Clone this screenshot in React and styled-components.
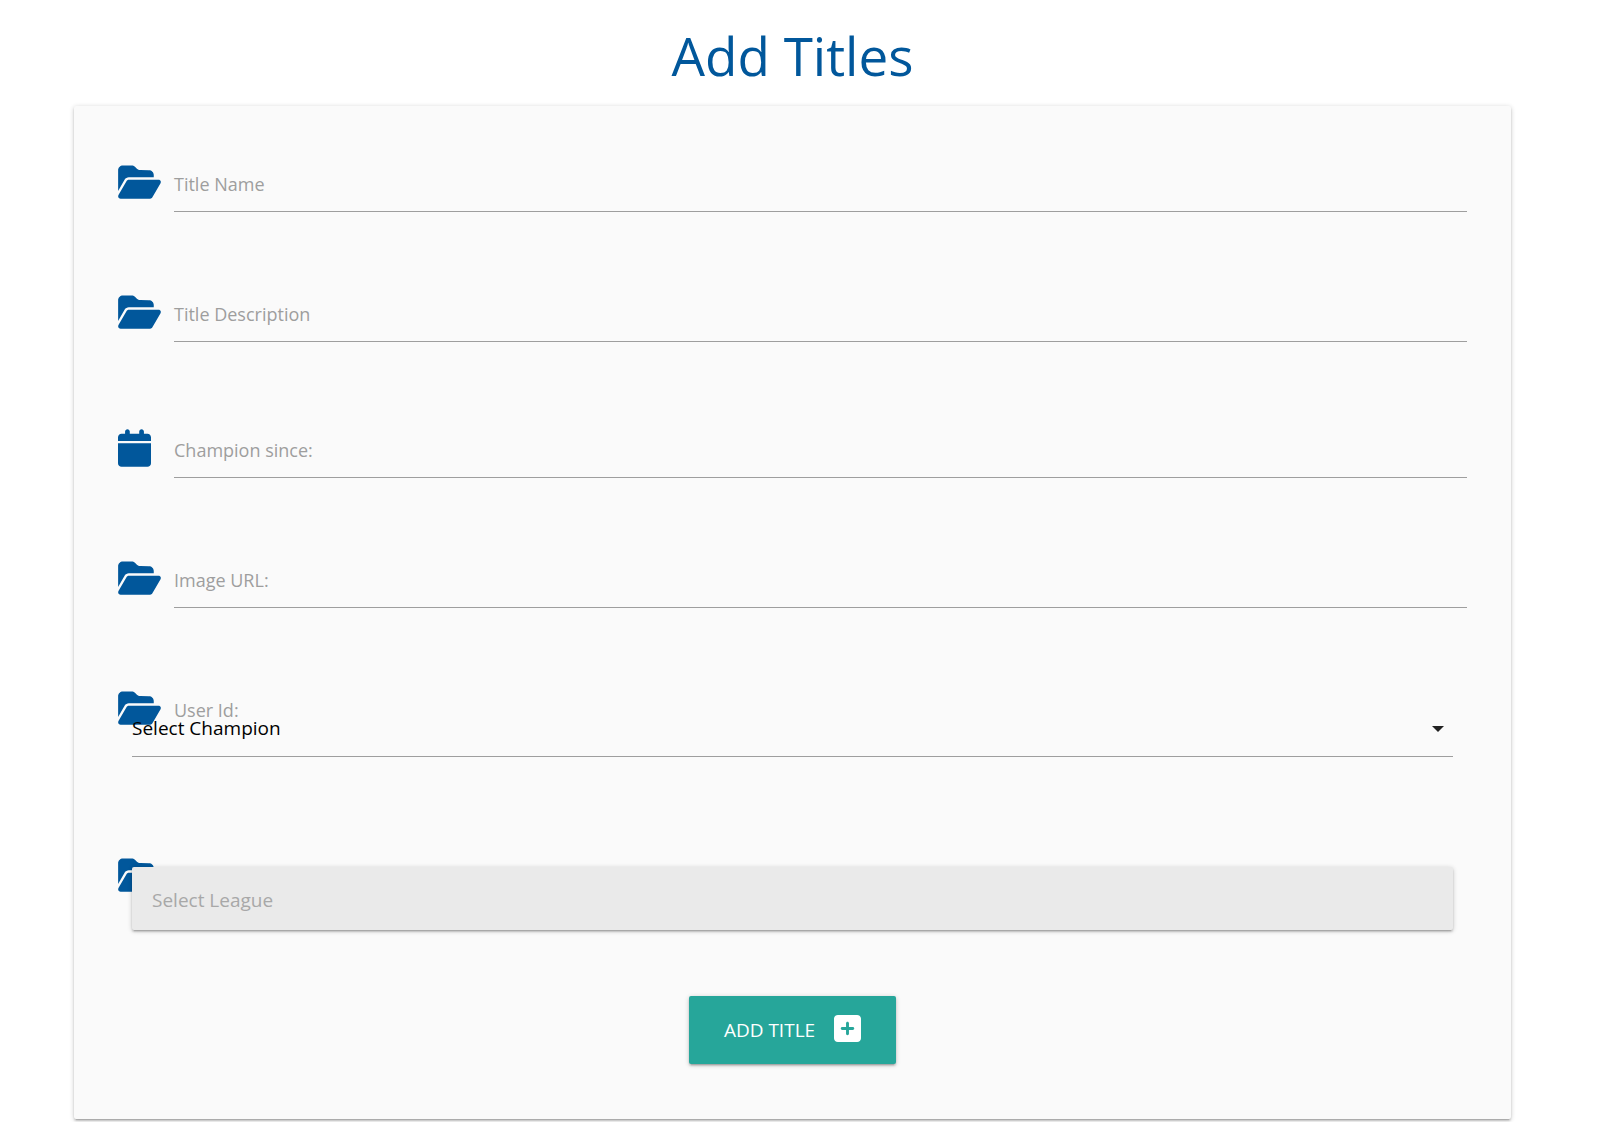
import React from "react";
import styled, { createGlobalStyle } from "styled-components";
import { FaFolderOpen, FaCalendar, FaSquarePlus } from "react-icons/fa6";

const GlobalStyle = createGlobalStyle`
  *, *::before, *::after { box-sizing: border-box; }
  body {
    margin: 0;
    background: #ffffff;
    font-family: "Segoe UI", "Open Sans", "Noto Sans", sans-serif;
    color: rgba(0, 0, 0, 0.87);
  }
`;

const raised = `
  box-shadow: 0 2px 2px 0 rgba(0, 0, 0, 0.14),
    0 3px 1px -2px rgba(0, 0, 0, 0.12),
    0 1px 5px 0 rgba(0, 0, 0, 0.2);
`;

const Page = styled.main`
  padding: 0 86px 3px 74px;
`;

const Title = styled.h1`
  margin: 0;
  padding-top: 16px;
  height: 106px;
  color: #01579b;
  font-size: 53px;
  font-weight: 400;
  line-height: 80px;
  text-align: center;
`;

const Card = styled.form`
  display: flex;
  flex-direction: column;
  padding: 46px 44px 55px;
  background: #fafafa;
  border-radius: 2px;
  ${raised}
`;

const Group = styled.div`
  display: flex;
  flex-direction: column;
  margin-bottom: ${(p) => p.$gap}px;
`;

const Field = styled.div`
  display: grid;
  grid-template-columns: 56px 1fr;
  align-items: center;
  height: 60px;
`;

const Icon = styled.span`
  display: flex;
  color: #01579b;

  svg {
    width: ${(p) => p.$width}px;
    height: 38px;
  }
`;

const Label = styled.label`
  grid-area: 1 / 2;
  padding-top: 3px;
  color: #9e9e9e;
  font-size: 18px;
  line-height: 28px;
  pointer-events: none;
`;

const Input = styled.input`
  grid-area: 1 / 2;
  width: 100%;
  height: 60px;
  padding: 3px 0 0;
  border: 0;
  border-bottom: 1px solid #9e9e9e;
  border-radius: 0;
  outline: 0;
  background: transparent;
  font: inherit;
  font-size: 18px;

  &:focus {
    border-bottom-color: #26a69a;
  }
`;

const SelectBox = styled.div`
  display: grid;
  align-items: center;
  position: relative;
  margin: -38px 14px 0;
`;

const Select = styled.select`
  grid-area: 1 / 1;
  width: 100%;
  height: 57px;
  padding: 0;
  appearance: none;
  border: 0;
  border-bottom: 1px solid #9e9e9e;
  border-radius: 0;
  outline: 0;
  background: transparent;
  color: #000000;
  font: inherit;
  font-size: 19px;
`;

const DisabledSelect = styled(Select)`
  height: 63px;
  padding: 3px 20px 0;
  border: 0;
  border-radius: 2px;
  background: #eaeaea;
  color: #a8a8a8;
  opacity: 1;
  ${raised}
`;

const Caret = styled.svg`
  grid-area: 1 / 1;
  justify-self: end;
  margin-right: 9px;
  width: 12px;
  height: 6px;
  fill: #212121;
  pointer-events: none;
`;

const Submit = styled.button`
  display: flex;
  align-items: center;
  align-self: center;
  gap: 19px;
  height: 68px;
  padding: 0 35px;
  border: 0;
  border-radius: 2px;
  background: #26a69a;
  color: #ffffff;
  font: inherit;
  font-size: 19px;
  text-transform: uppercase;
  cursor: pointer;
  ${raised}

  svg {
    width: 27px;
    height: 31px;
    margin-bottom: 3px;
  }
`;

const FolderIcon = () => (
  <Icon $width={43} aria-hidden="true"><FaFolderOpen /></Icon>
);

const CalendarIcon = () => (
  <Icon $width={33} aria-hidden="true"><FaCalendar /></Icon>
);

const textFields = [
  { id: "title-name", label: "Title Name", icon: FolderIcon, gap: 70 },
  { id: "title-description", label: "Title Description", icon: FolderIcon, gap: 76 },
  { id: "champion-since", label: "Champion since:", icon: CalendarIcon, gap: 70 },
  { id: "image-url", label: "Image URL:", icon: FolderIcon, gap: 70 },
];

export default function App() {
  return (
    <>
      <GlobalStyle />
      <Page>
        <Title>Add Titles</Title>
        <Card onSubmit={(e) => e.preventDefault()}>
          {textFields.map(({ id, label, icon: Glyph, gap }) => (
            <Group key={id} $gap={gap}>
              <Field>
                <Glyph />
                <Input id={id} name={id} type="text" />
                <Label htmlFor={id}>{label}</Label>
              </Field>
            </Group>
          ))}

          <Group $gap={88}>
            <Field>
              <FolderIcon />
              <Label htmlFor="champion">User Id:</Label>
            </Field>
            <SelectBox>
              <Select id="champion" name="champion" defaultValue="">
                <option value="">Select Champion</option>
              </Select>
              <Caret viewBox="0 0 12 6" aria-hidden="true">
                <path d="M0 0h12L6 6z" />
              </Caret>
            </SelectBox>
          </Group>

          <Group $gap={66}>
            <Field>
              <FolderIcon />
            </Field>
            <SelectBox>
              <DisabledSelect name="league" aria-label="League" defaultValue="" disabled>
                <option value="">Select League</option>
              </DisabledSelect>
            </SelectBox>
          </Group>

          <Submit type="submit">
            Add Title
            <FaSquarePlus aria-hidden="true" />
          </Submit>
        </Card>
      </Page>
    </>
  );
}
